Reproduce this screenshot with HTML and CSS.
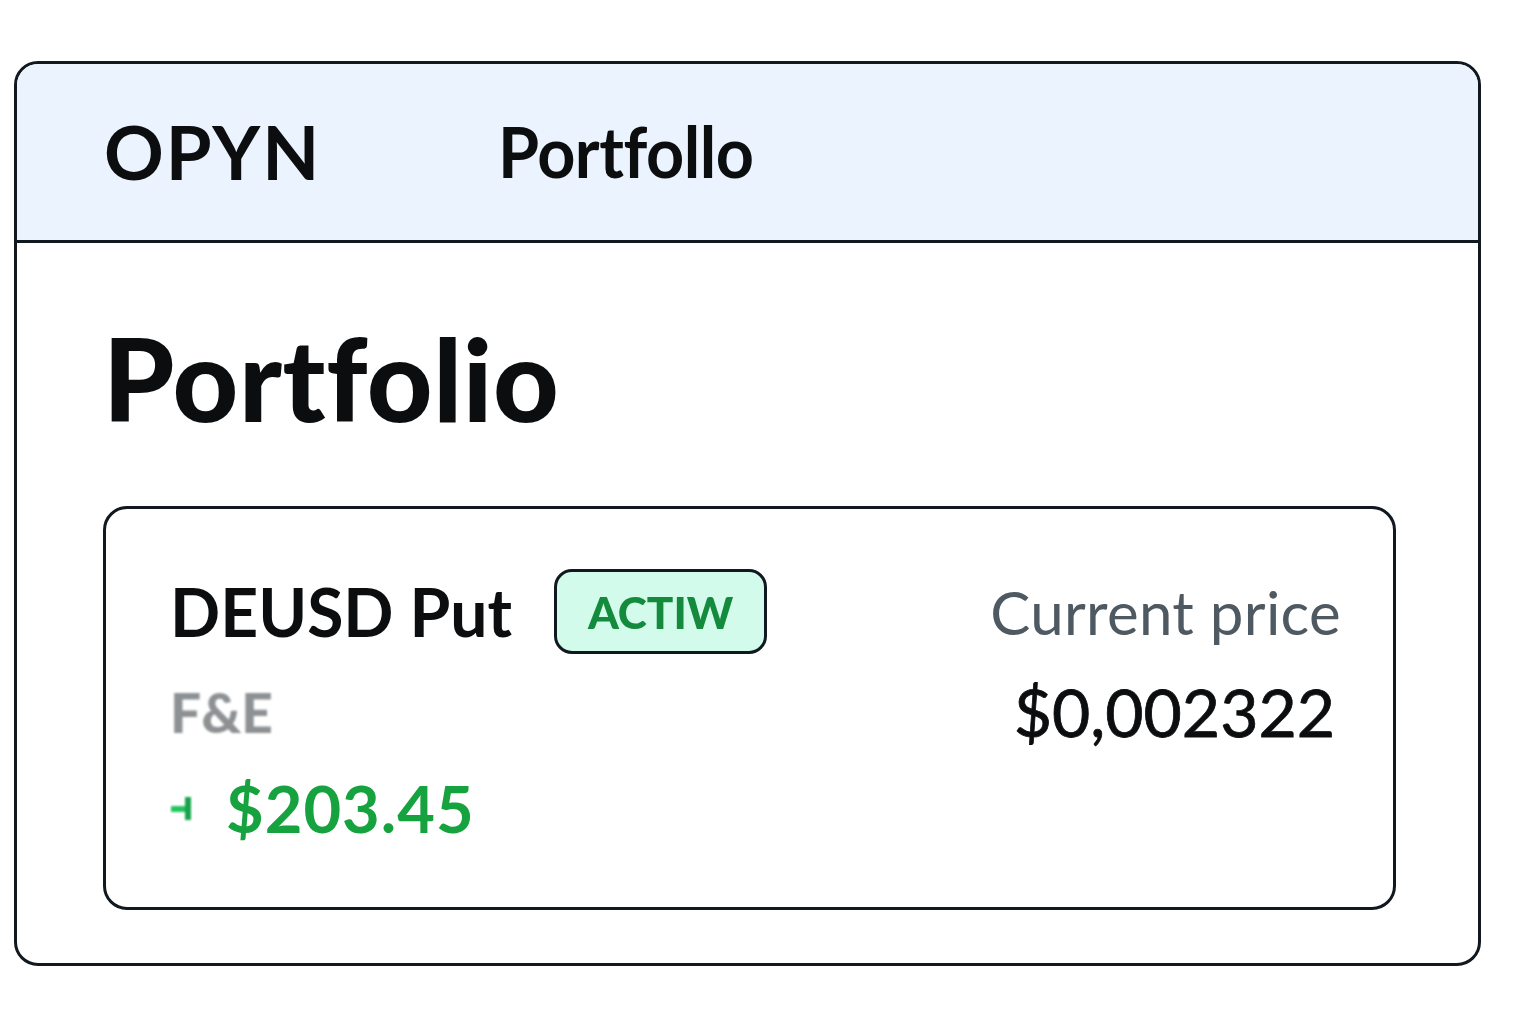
FILE: index.html
```html
<!DOCTYPE html>
<html>
<head>
<meta charset="utf-8">
<link rel="stylesheet" href="styles.css">
</head>
<body>
<div class="app">
  <header class="topbar">
    <div class="logo">OPYN</div>
    <nav class="nav">Portfollo</nav>
  </header>
  <main class="content">
    <h1 class="title">Portfolio</h1>
    <section class="card">
      <div class="row row-top">
        <div class="name-group">
          <span class="name">DEUSD Put</span>
          <span class="badge">ACTIW</span>
        </div>
        <span class="label">Current price</span>
      </div>
      <div class="row row-mid">
        <span class="pnl-label">F&amp;E</span>
        <span class="price">$0,002322</span>
      </div>
      <div class="row row-bottom">
        <svg class="pnl-icon" width="24" height="28" viewBox="0 0 24 28"><path d="M1 15h14" stroke="#22c55e" stroke-width="6"/><path d="M18 3v23" stroke="#16a34a" stroke-width="6"/></svg>
        <span class="pnl">$203.45</span>
      </div>
    </section>
  </main>
</div>
</body>
</html>
```
FILE: styles.css
```css
html, body {
  margin: 0;
  padding: 0;
  background: #ffffff;
}
body {
  font-family: Lato, "Open Sans", sans-serif;
  color: #0b0d0f;
}
.app {
  margin: 61px 0 0 14px;
  width: 1467px;
  height: 905px;
  box-sizing: border-box;
  border: 3px solid #111820;
  border-radius: 24px;
  overflow: hidden;
}
.topbar {
  height: 179px;
  box-sizing: border-box;
  background: #ebf3fe;
  border-bottom: 3px solid #111820;
  display: flex;
  align-items: center;
  padding-left: 87px;
  padding-bottom: 2px;
}
.logo {
  font-size: 74px;
  font-weight: 700;
  letter-spacing: 2px;
  width: 394px;
}
.nav {
  font-size: 70px;
  font-weight: 700;
  letter-spacing: -0.5px;
  transform: scaleX(0.95);
  transform-origin: left center;
}
.content {
  padding: 78px 0 0 86px;
}
.title {
  margin: 0;
  font-size: 114px;
  font-weight: 900;
  line-height: 1;
  letter-spacing: 0.6px;
}
.card {
  margin-top: 71px;
  width: 1293px;
  height: 404px;
  box-sizing: border-box;
  border: 3px solid #111820;
  border-radius: 24px;
  padding: 60px 52px 0 64px;
  display: flex;
  flex-direction: column;
}
.row {
  display: flex;
  align-items: center;
  justify-content: space-between;
}
.name-group {
  display: flex;
  align-items: center;
  gap: 42px;
}
.name {
  font-size: 66px;
  font-weight: 700;
}
.badge {
  display: inline-flex;
  align-items: center;
  justify-content: center;
  width: 213px;
  height: 85px;
  margin-top: 0;
  box-sizing: border-box;
  border: 3px solid #111820;
  border-radius: 18px;
  background: #d3fbec;
  color: #138a3c;
  font-size: 44px;
  font-weight: 900;
  filter: blur(0.6px);
}
.label {
  font-size: 60px;
  color: #4f5962;
  letter-spacing: 0.3px;
}
.row-mid {
  margin-top: 18px;
}
.pnl-label {
  font-size: 55px;
  font-weight: 900;
  color: #8e9194;
  filter: blur(1.2px);
}
.price {
  font-size: 66px;
  font-weight: 400;
  margin-right: 6px;
  -webkit-text-stroke: 0.8px #0b0d0f;
}
.row-bottom {
  justify-content: flex-start;
  margin-top: 18px;
  gap: 32px;
}
.pnl-icon {
  filter: blur(1px);
}
.pnl {
  font-size: 65px;
  font-weight: 700;
  color: #16a23e;
  letter-spacing: 1px;
}
```
